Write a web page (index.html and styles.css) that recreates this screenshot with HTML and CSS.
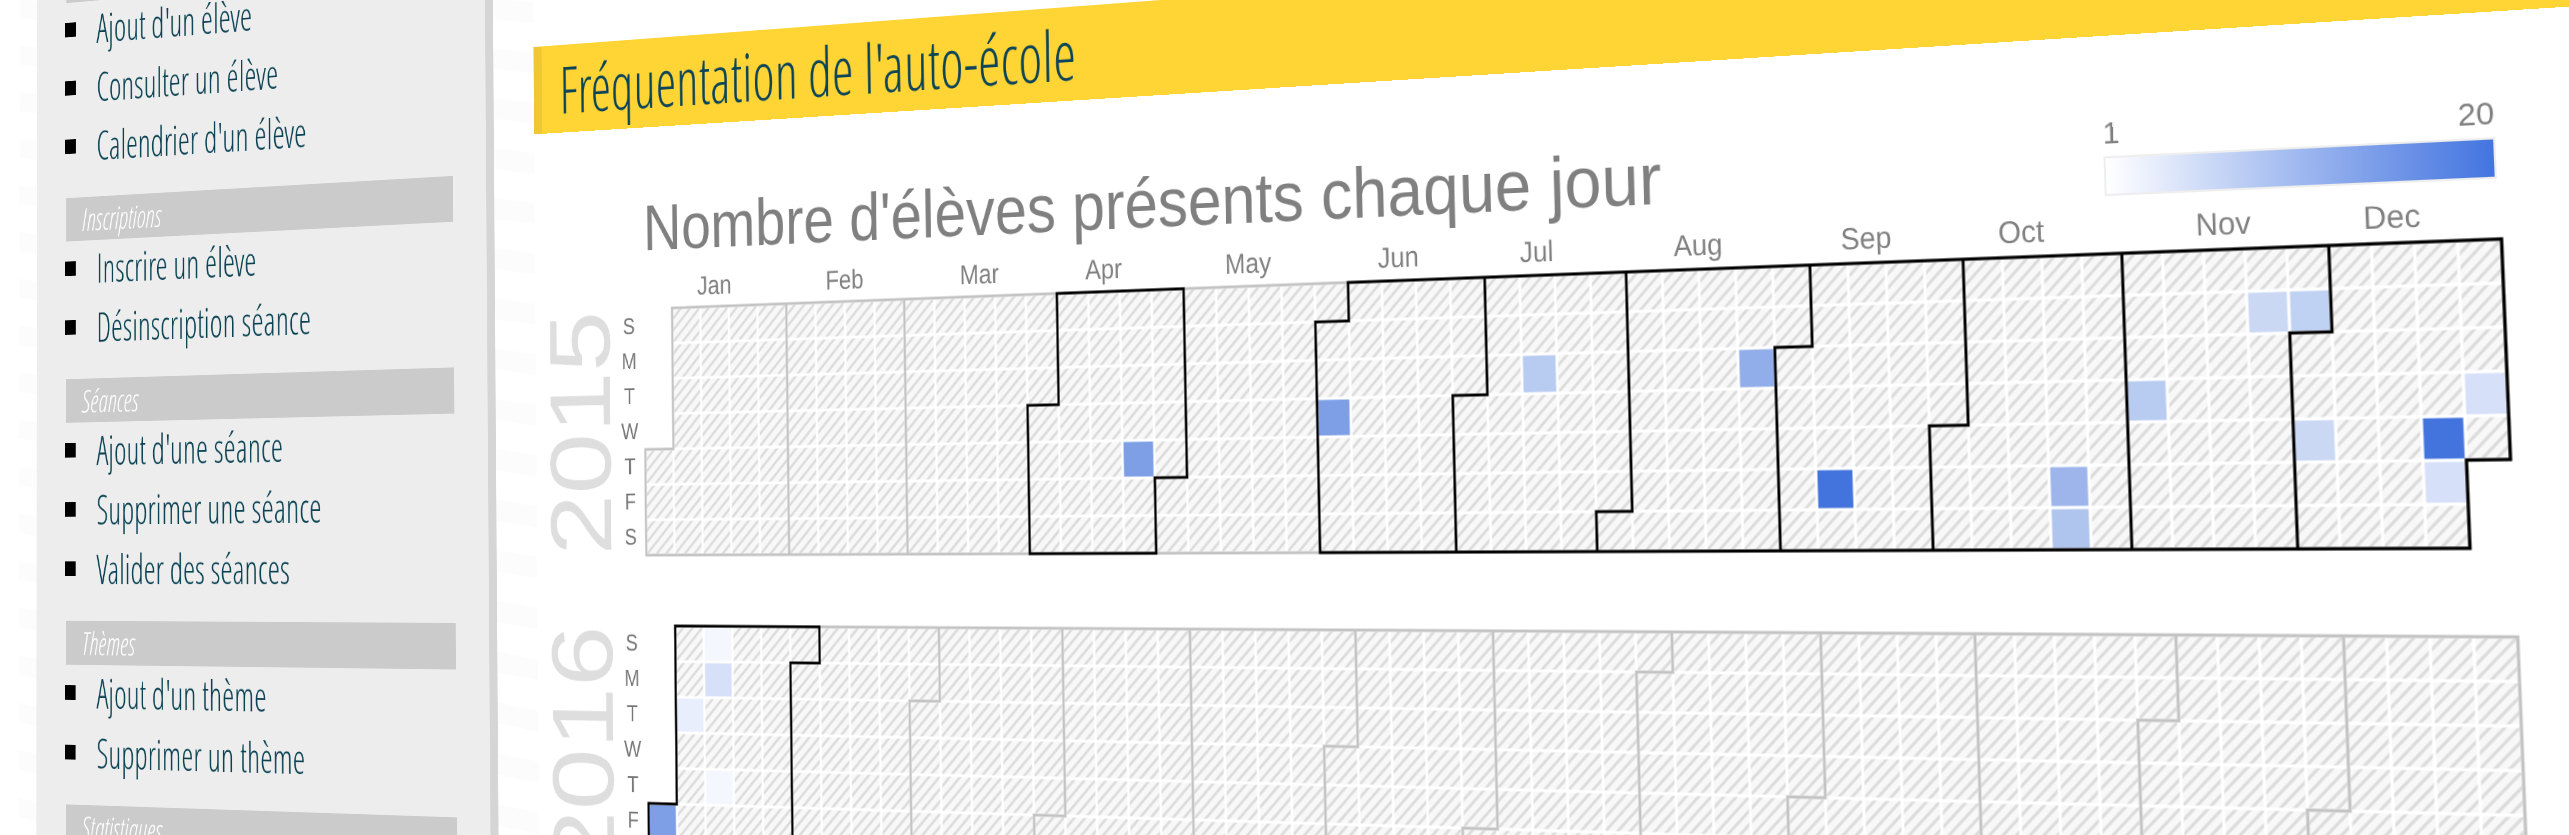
FILE: index.html
```html
<!DOCTYPE html>
<html lang="fr">
<head>
<meta charset="utf-8">
<title>Fréquentation de l'auto-école</title>
<link rel="stylesheet" href="styles.css">
</head>
<body>
<div class="stage">
  <nav class="sidebar">
    <div class="section-label"></div>
    <ul class="menu">
      <li><a href="#">Ajout d'un élève</a></li>
      <li><a href="#">Consulter un élève</a></li>
      <li><a href="#">Calendrier d'un élève</a></li>
    </ul>
    <h3 class="section-label">Inscriptions</h3>
    <ul class="menu">
      <li><a href="#">Inscrire un élève</a></li>
      <li><a href="#">Désinscription séance</a></li>
    </ul>
    <h3 class="section-label">Séances</h3>
    <ul class="menu">
      <li><a href="#">Ajout d'une séance</a></li>
      <li><a href="#">Supprimer une séance</a></li>
      <li><a href="#">Valider des séances</a></li>
    </ul>
    <h3 class="section-label">Thèmes</h3>
    <ul class="menu">
      <li><a href="#">Ajout d'un thème</a></li>
      <li><a href="#">Supprimer un thème</a></li>
    </ul>
    <h3 class="section-label">Statistiques</h3>
  </nav>
  <main class="content">
    <h1 class="banner">Fréquentation de l'auto-école</h1>
    <div class="chart-head">
      <h2 class="chart-title">Nombre d'élèves présents chaque jour</h2>
      <div class="legend">
        <div class="legend-values"><span>1</span><span>20</span></div>
        <div class="legend-bar"></div>
      </div>
    </div>
    <svg class="calendar" viewBox="-158 -49 2355 700" role="img" aria-label="Nombre d'élèves présents chaque jour">
      <defs>
        <pattern id="hatch" width="40" height="40" patternUnits="userSpaceOnUse">
          <rect width="40" height="40" class="hatch-bg"/>
          <path d="M-2 2L2 -2M-2 15.33L15.33 -2M-2 28.67L28.67 -2M-2 42L42 -2M11.33 42L42 11.33M24.67 42L42 24.67M38 42L42 38" class="hatch-line"/>
        </pattern>
        <pattern id="grid" width="40" height="40" patternUnits="userSpaceOnUse">
          <path d="M0 0H40M0 40H40M0 0V40M40 0V40" class="grid-line"/>
        </pattern>
        <path id="y2015" d="M40 0H2120V200H2080V280H0V160H40Z"/>
        <path id="y2016" d="M40 0H2120V280H0V200H40Z"/>
      </defs>
      <g class="months">
        <text x="100" y="-14">Jan</text><text x="280" y="-14">Feb</text><text x="460" y="-14">Mar</text>
        <text x="620" y="-14">Apr</text><text x="800" y="-14">May</text><text x="980" y="-14">Jun</text>
        <text x="1140" y="-14">Jul</text><text x="1320" y="-14">Aug</text><text x="1500" y="-14">Sep</text>
        <text x="1660" y="-14">Oct</text><text x="1860" y="-14">Nov</text><text x="2020" y="-14">Dec</text>
      </g>
      <g>
        <text class="year" transform="translate(-50 140) rotate(-90)">2015</text>
        <g class="days">
          <text x="-22" y="28">S</text><text x="-22" y="68">M</text><text x="-22" y="108">T</text><text x="-22" y="148">W</text>
          <text x="-22" y="188">T</text><text x="-22" y="228">F</text><text x="-22" y="268">S</text>
        </g>
        <use href="#y2015" fill="url(#hatch)"/>
        <g class="cells">
          <rect x="640" y="160" width="40" height="40" fill="#7e9fe6"/>
          <rect x="880" y="120" width="40" height="40" fill="#7e9fe6"/>
          <rect x="1120" y="80" width="40" height="40" fill="#b8cbf1"/>
          <rect x="1360" y="80" width="40" height="40" fill="#92aeea"/>
          <rect x="1440" y="200" width="40" height="40" fill="#4374dd"/>
          <rect x="1680" y="200" width="40" height="40" fill="#9db5eb"/>
          <rect x="1680" y="240" width="40" height="40" fill="#b0c5ee"/>
          <rect x="1760" y="120" width="40" height="40" fill="#b8cbf1"/>
          <rect x="1880" y="40" width="40" height="40" fill="#cad8f4"/>
          <rect x="1920" y="40" width="40" height="40" fill="#c0d2f4"/>
          <rect x="1920" y="160" width="40" height="40" fill="#cad8f4"/>
          <rect x="2040" y="160" width="40" height="40" fill="#4374dd"/>
          <rect x="2040" y="200" width="40" height="40" fill="#d6e0f8"/>
          <rect x="2080" y="120" width="40" height="40" fill="#d6e0f8"/>
        </g>
        <use href="#y2015" fill="url(#grid)"/>
        <use href="#y2015" class="empty-month"/>
        <path class="empty-month" d="M200 0V280M360 0V280"/>
        <path class="full-month" d="M560 0H720V200H680V280H520V120H560ZM920 0H2120V200H2080V280H880V40H920ZM1080 0V120H1040V280M1240 0V240H1200V280M1440 0V80H1400V280M1600 0V160H1560V280M1760 0V280M1960 0V80H1920V280"/>
      </g>
      <g transform="translate(0 360)">
        <text class="year" transform="translate(-50 140) rotate(-90)">2016</text>
        <g class="days">
          <text x="-22" y="28">S</text><text x="-22" y="68">M</text><text x="-22" y="108">T</text><text x="-22" y="148">W</text>
          <text x="-22" y="188">T</text><text x="-22" y="228">F</text><text x="-22" y="268">S</text>
        </g>
        <use href="#y2016" fill="url(#hatch)"/>
        <g class="cells">
          <rect x="0" y="200" width="40" height="40" fill="#7e9fe6"/>
          <rect x="40" y="80" width="40" height="40" fill="#e9eefc"/>
          <rect x="80" y="0" width="40" height="40" fill="#f4f7fd"/>
          <rect x="80" y="40" width="40" height="40" fill="#d6e0f8"/>
          <rect x="80" y="160" width="40" height="40" fill="#f4f7fd"/>
        </g>
        <use href="#y2016" fill="url(#grid)"/>
        <use href="#y2016" class="empty-month"/>
        <path class="empty-month" d="M400 0V80H360V280M560 0V200H520V280M720 0V280M920 0V120H880V280M1080 0V200H1040V280M1280 0V40H1240V280M1440 0V160H1400V280M1600 0V240H1560V280M1800 0V80H1760V280M1960 0V160H1920V280"/>
        <path class="full-month" d="M40 0H240V40H200V280H0V200H40Z"/>
      </g>
    </svg>
  </main>
</div>
</body>
</html>
```
FILE: styles.css
```css
* {
  box-sizing: border-box;
}

body {
  margin: 0;
  height: 100vh;
  overflow: hidden;
  background: #fff;
}

h1, h2, h3, ul {
  margin: 0;
  padding: 0;
  font-weight: normal;
}

/* The whole page is seen as a tilted plane */
.stage {
  display: flex;
  align-items: stretch;
  width: 126vw;
  padding-left: 90px;
  background: linear-gradient(90deg, #fff 0 60px, transparent 60px),
    repeating-linear-gradient(8deg, #fcfcfc 0 24px, #fff 24px 58px);
  transform-origin: 0 0;
  transform: matrix3d(0.638043, -0.05625, 0, -0.0000965673, -0.00140833, 0.874056, 0, -0.0000148417, 0, 0, 1, 0, -16.467, -15.8344, 0, 1.110823);
}

.sidebar {
  flex: 0 0 732px;
  margin: -23px 60px 0 0;
  padding: 0 50px;
  background: #ededed;
  border-right: 12px solid #d5d5d5;
  font-family: "Open Sans Condensed Light", "Open Sans Condensed", "Open Sans", sans-serif;
}

.section-label {
  height: 54px;
  padding-left: 26px;
  background: #cbcbcb;
  color: #fff;
  font-size: 39px;
  font-style: italic;
  font-weight: 300;
  line-height: 54px;
}

.menu {
  margin-bottom: 25px;
  list-style: none;
}

.menu li {
  display: flex;
  align-items: center;
  gap: 35px;
  height: 73px;
  margin-left: -2px;
  padding-bottom: 5px;
}

.menu li::before {
  content: "";
  width: 18px;
  height: 18px;
  background: #000;
}

.menu a {
  color: #0b4354;
  font-size: 50px;
  font-weight: 300;
  line-height: 68px;
  text-decoration: none;
  white-space: nowrap;
}

.content {
  flex: 1;
  min-width: 0;
  padding-top: 130px;
  background: #fff;
}

.banner {
  height: 102px;
  padding-left: 26px;
  border-left: 12px solid #f0c633;
  background: #ffd435;
  color: #0d4558;
  font-family: "Open Sans Condensed Light", "Open Sans Condensed", "Open Sans", sans-serif;
  font-size: 75px;
  font-weight: 300;
  line-height: 102px;
  white-space: nowrap;
}

.chart-head {
  display: flex;
  justify-content: space-between;
  align-items: flex-end;
  margin-top: 71px;
  padding: 0 79px 0 158px;
  color: #808080;
  font-family: "Liberation Sans", Arial, sans-serif;
}

.chart-title {
  font-size: 75px;
  line-height: 88px;
  white-space: nowrap;
}

.legend {
  width: 373px;
  padding-bottom: 6px;
}

.legend-values {
  display: flex;
  justify-content: space-between;
  margin-bottom: 5px;
  font-size: 30px;
  line-height: 34px;
}

.legend-bar {
  height: 38px;
  border: 2px solid #eee;
  background: linear-gradient(90deg, #fff, #4374e0);
}

.calendar {
  display: block;
  width: 100%;
  overflow: visible;
  font-family: "Liberation Sans", Arial, sans-serif;
}

.months {
  fill: #808080;
  font-size: 30px;
  text-anchor: middle;
}

.days {
  fill: #777;
  font-size: 26px;
  text-anchor: middle;
}

.year {
  fill: #dedede;
  font-size: 126px;
  text-anchor: middle;
}

.hatch-bg {
  fill: #f8f8f8;
}

.hatch-line {
  stroke: #dcdcdc;
  stroke-width: 3;
}

.grid-line {
  stroke: #fff;
  stroke-width: 3;
}

.empty-month {
  fill: none;
  stroke: #c3c3c3;
  stroke-width: 3;
}

.full-month {
  fill: none;
  stroke: #000;
  stroke-width: 3;
}
```
